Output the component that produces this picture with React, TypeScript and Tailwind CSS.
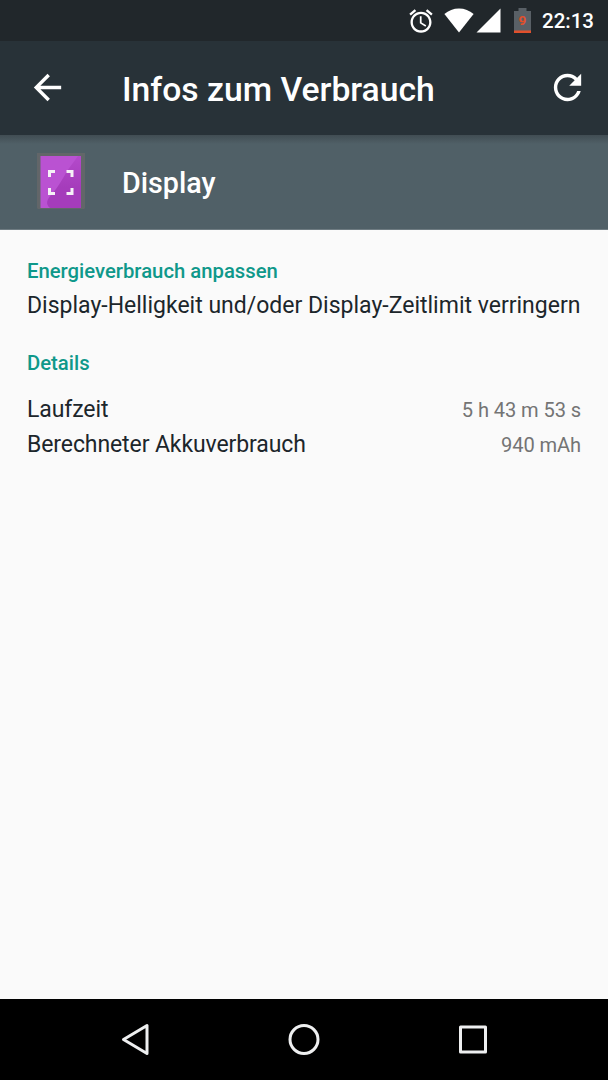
import React from 'react'

const details = [
  { label: 'Laufzeit', value: '5 h 43 m 53 s' },
  { label: 'Berechneter Akkuverbrauch', value: '940 mAh' },
]

const StatusBar: React.FC = () => {
  return (
    <div className="flex h-[41px] shrink-0 items-center justify-end bg-[#21272b] pr-[14px] text-white">
      <svg className="h-[28px] w-[28px]" viewBox="0 0 24 24" fill="currentColor">
        <path d="M22 5.72l-4.6-3.86-1.29 1.53 4.6 3.86L22 5.72zM7.88 3.39L6.6 1.86 2 5.71l1.29 1.53 4.59-3.85zM12.5 8H11v6l4.75 2.85.75-1.23-4-2.37V8zM12 4c-4.97 0-9 4.03-9 9s4.02 9 9 9c4.97 0 9-4.03 9-9s-4.03-9-9-9zm0 16c-3.87 0-7-3.13-7-7s3.13-7 7-7 7 3.13 7 7-3.13 7-7 7z" />
      </svg>
      <svg className="ml-[9px] h-[25px] w-[30px]" viewBox="0 0 30 25" fill="currentColor">
        <path d="M15 24.5L.4 6C4.5 2.5 9.5.5 15 .5s10.5 2 14.6 5.5z" />
      </svg>
      <svg className="ml-[2px] h-[25px] w-[25px]" viewBox="0 0 25 25" fill="currentColor">
        <path d="M.5 24.5h24v-24z" />
      </svg>
      <div className="relative ml-[13px] h-[25px] w-[17px]">
        <svg className="h-[25px] w-[17px]" viewBox="0 0 17 25">
          <path d="M0 3h4.500V0h8v3H17v22H0z" fill="#596066" />
          <path d="M0 22.500h17V25H0z" fill="#e2502c" />
        </svg>
        <span className="absolute inset-x-0 top-[5px] text-center text-[13.5px] leading-[14px] font-bold text-[#e2502c]">
          9
        </span>
      </div>
      <span className="ml-[11px] pt-px text-[20.5px] leading-none font-medium">22:13</span>
    </div>
  )
}

const DisplayIcon: React.FC = () => {
  return (
    <svg className="h-[58px] w-[50px]" viewBox="0 0 50 58">
      <defs>
        <linearGradient id="screen" x1="0" y1="0" x2="0" y2="1">
          <stop offset="0" stopColor="#b44acb" />
          <stop offset="0.6" stopColor="#a53cbb" />
        </linearGradient>
      </defs>
      <path d="M1 0h48v55l-1 1H2l-1-1z" fill="#626669" />
      <path d="M4.500 3H45v52H4.500z" fill="#ba52d2" />
      <path d="M45 3v52H14c-5-4-3-9 2-14 6-7 10-14 15-23L42 3z" fill="url(#screen)" />
      <path
        d="M13.500 24v-5.500H19M30.500 18.500H36V24M36 35v5.500h-5.500M19 40.500h-5.500V35"
        fill="none"
        stroke="#f5f1f6"
        strokeWidth="3"
      />
    </svg>
  )
}

const NavigationBar: React.FC = () => {
  return (
    <div className="flex h-[81px] shrink-0 items-center justify-between bg-black px-[115px]">
      <svg className="h-10 w-10" viewBox="0 0 40 40" fill="none" stroke="#eeeff0" strokeWidth="3" strokeLinejoin="round">
        <path d="M32 5.500v28L8.500 19.500z" />
      </svg>
      <svg className="h-10 w-10" viewBox="0 0 40 40" fill="none" stroke="#eeeff0" strokeWidth="3">
        <circle cx="20" cy="19.500" r="14" />
      </svg>
      <svg className="h-10 w-10" viewBox="0 0 40 40" fill="none" stroke="#eeeff0" strokeWidth="3" strokeLinejoin="round">
        <path d="M7.500 7h25v25h-25z" />
      </svg>
    </div>
  )
}

const App: React.FC = () => {
  return (
    <div className="flex h-[1080px] w-[608px] flex-col bg-[#fafafa] font-['Roboto',sans-serif]">
      <StatusBar />

      <div className="flex h-[94px] shrink-0 items-center bg-[#283238] pr-[20px] pl-[27px] text-white">
        <svg className="mb-px h-[41px] w-[41px]" viewBox="0 0 24 24" fill="currentColor">
          <path d="M20 11H7.830l5.590-5.590L12 4l-8 8 8 8 1.410-1.410L7.830 13H20v-2z" />
        </svg>
        <h1 className="ml-[54px] pt-[3px] text-[33.7px] leading-10 font-medium whitespace-nowrap">
          Infos zum Verbrauch
        </h1>
        <svg className="mb-px ml-auto h-[41px] w-[41px]" viewBox="0 0 24 24" fill="currentColor">
          <path d="M17.650 6.350C16.200 4.900 14.210 4 12 4c-4.420 0-7.990 3.580-7.990 8s3.570 8 7.990 8c3.730 0 6.840-2.550 7.730-6h-2.080c-.82 2.330-3.040 4-5.650 4-3.310 0-6-2.690-6-6s2.690-6 6-6c1.660 0 3.140.69 4.220 1.780L13 11h7V4l-2.350 2.350z" />
        </svg>
      </div>

      <div className="flex h-[95px] shrink-0 items-center border-b border-[#6f7c82] bg-[#506067] bg-linear-to-b from-[#414d53] to-[#506067] to-[9px] pl-[36px] text-white">
        <DisplayIcon />
        <h2 className="ml-[36px] pt-px text-[28.7px] leading-8 font-medium">Display</h2>
      </div>

      <div className="flex-1 px-[27px] pt-[28px] text-[#1c262b]">
        <h3 className="text-[20.3px] leading-[26px] font-medium text-[#0f988a]">Energieverbrauch anpassen</h3>
        <p className="mt-[6px] text-[23px] leading-[32px] whitespace-nowrap">
          Display-Helligkeit und/oder Display-Zeitlimit verringern
        </p>

        <h3 className="mt-[28px] text-[20.3px] leading-[26px] font-medium text-[#0f988a]">Details</h3>
        <div className="mt-[15px]">
          {details.map((item) => (
            <div key={item.label} className="flex h-[35px] items-center justify-between">
              <span className="pt-[2px] text-[23px] leading-8 tracking-[-0.1px]">{item.label}</span>
              <span className="pt-[2px] text-[20.1px] leading-8 tracking-[-0.1px] text-[#747474]">{item.value}</span>
            </div>
          ))}
        </div>
      </div>

      <NavigationBar />
    </div>
  )
}

export default App
